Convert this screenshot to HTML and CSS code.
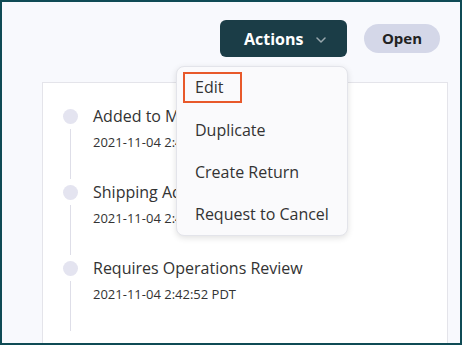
FILE: index.html
```html
<!DOCTYPE html>
<html lang="en">
<head>
  <meta charset="UTF-8">
  <meta name="viewport" content="width=device-width, initial-scale=1.0">
  <title>Order History</title>
  <link rel="stylesheet" href="styles.css">
</head>
<body>
  <div class="frame">
    <div class="toolbar">
      <div class="actions">
        <button class="actions-btn">
          Actions
          <svg class="chevron" width="10" height="6" viewBox="0 0 10 6" fill="none">
            <path d="M1 1l4 4 4-4" stroke="currentColor" stroke-width="1.5" stroke-linecap="round" stroke-linejoin="round"/>
          </svg>
        </button>
        <ul class="menu">
          <li class="menu-item focused">Edit</li>
          <li class="menu-item">Duplicate</li>
          <li class="menu-item">Create Return</li>
          <li class="menu-item">Request to Cancel</li>
        </ul>
      </div>
      <span class="status">Open</span>
    </div>

    <div class="card">
      <ul class="timeline">
        <li class="event">
          <div class="rail"><span class="dot"></span><span class="line"></span></div>
          <div class="event-body">
            <p class="event-title">Added to Manual Review</p>
            <p class="event-date">2021-11-04 2:42:52 PDT</p>
          </div>
        </li>
        <li class="event">
          <div class="rail"><span class="dot"></span><span class="line"></span></div>
          <div class="event-body">
            <p class="event-title">Shipping Address Updated</p>
            <p class="event-date">2021-11-04 2:42:52 PDT</p>
          </div>
        </li>
        <li class="event">
          <div class="rail"><span class="dot"></span><span class="line"></span></div>
          <div class="event-body">
            <p class="event-title">Requires Operations Review</p>
            <p class="event-date">2021-11-04 2:42:52 PDT</p>
          </div>
        </li>
      </ul>
    </div>
  </div>
</body>
</html>
```

FILE: styles.css
```css
* {
  box-sizing: border-box;
}

body {
  margin: 0;
  font-family: "Open Sans", "Noto Sans", sans-serif;
  color: #333;
}

.frame {
  height: 345px;
  border: 2px solid #0f4b55;
  background: #f8f9fd;
  overflow: hidden;
}

.toolbar {
  display: flex;
  justify-content: flex-end;
  align-items: center;
  gap: 17px;
  padding: 18px 20px 0 0;
}

.actions {
  position: relative;
}

.actions-btn {
  display: flex;
  align-items: center;
  gap: 13px;
  width: 127px;
  height: 37px;
  padding: 0 0 0 24px;
  background: #1b3d47;
  color: #fff;
  border: none;
  border-radius: 6px;
  font-family: inherit;
  font-size: 16px;
  font-weight: 700;
  cursor: pointer;
}

.chevron {
  color: #9aa8ae;
  margin-top: 2px;
}

.status {
  display: inline-block;
  width: 76px;
  height: 29px;
  line-height: 29px;
  text-align: center;
  background: #d4d7e8;
  border-radius: 15px;
  font-size: 15px;
  font-weight: 700;
  color: #222;
}

.menu {
  position: absolute;
  top: 46px;
  left: -44px;
  width: 172px;
  margin: 0;
  padding: 5px 6px 0;
  list-style: none;
  background: #fafafc;
  border: 1px solid #e3e4ea;
  border-radius: 8px;
  box-shadow: 0 2px 6px rgba(0, 0, 0, 0.12);
  z-index: 2;
}

.menu-item {
  height: 42px;
  line-height: 42px;
  padding-left: 12px;
  font-size: 16px;
  color: #333;
  white-space: nowrap;
}

.menu-item.focused {
  width: 59px;
  height: 31px;
  line-height: 27px;
  margin-bottom: 6px;
  padding-left: 10px;
  border: 2px solid #e8592b;
}

.card {
  margin: 25px 12px 0 40px;
  height: 300px;
  background: #fff;
  border: 1px solid #e4e4ea;
  padding: 26px 20px 0;
}

.timeline {
  margin: 0;
  padding: 0;
  list-style: none;
}

.event {
  display: flex;
  gap: 15px;
  height: 76px;
}

.rail {
  display: flex;
  flex-direction: column;
  align-items: center;
  width: 15px;
}

.dot {
  width: 15px;
  height: 15px;
  border-radius: 50%;
  background: #e4e4f0;
}

.line {
  flex: 1;
  width: 1px;
  margin: 5px 0 6px;
  background: #dedee8;
}

.event-title {
  margin: -4px 0 0;
  font-size: 16px;
  line-height: 22px;
}

.event-date {
  margin: 6px 0 0;
  font-size: 13px;
  line-height: 18px;
}
```
